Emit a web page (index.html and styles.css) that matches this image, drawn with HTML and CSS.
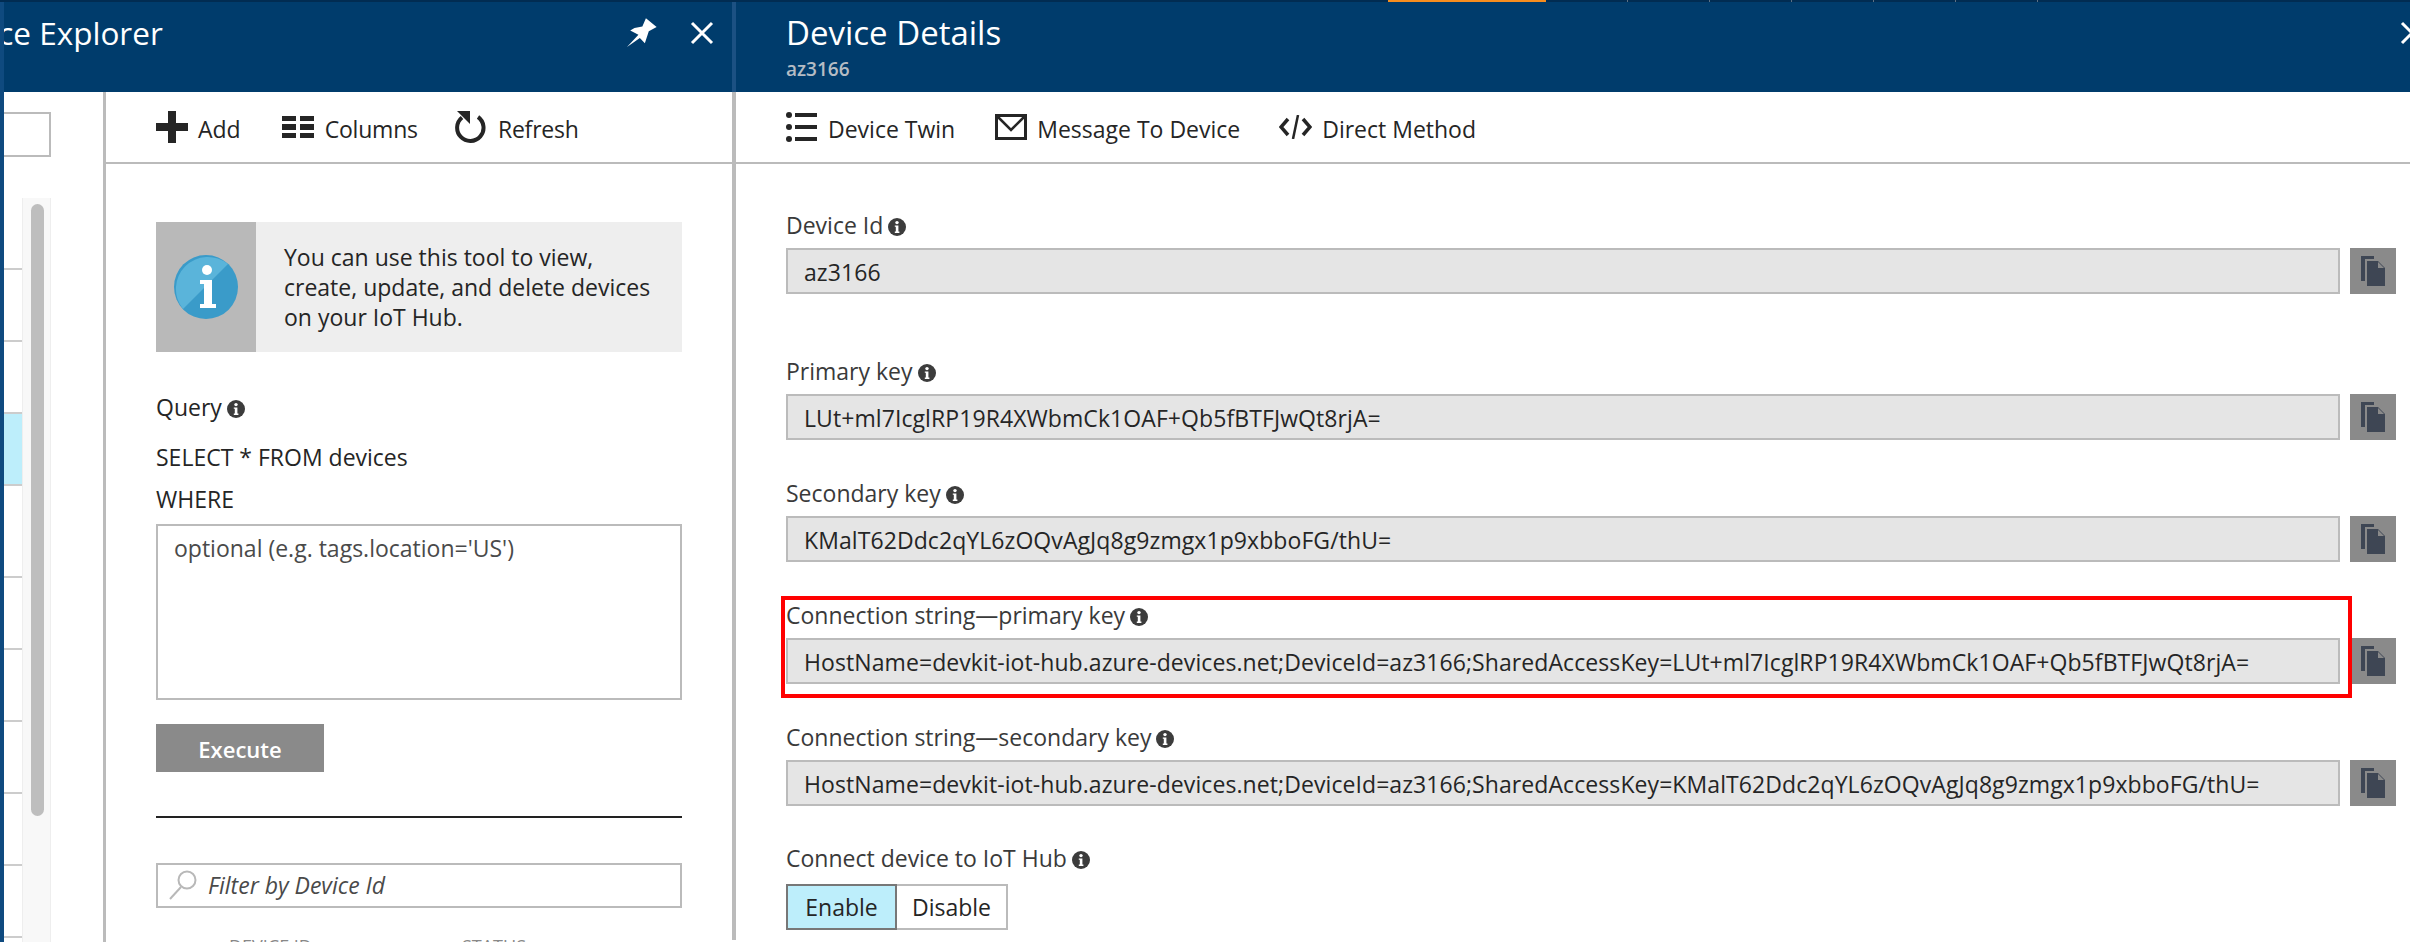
FILE: index.html
```html
<!DOCTYPE html>
<html lang="en">
<head>
  <meta charset="UTF-8">
  <title>Device Details</title>
  <link rel="stylesheet" href="styles.css">
</head>
<body>

  <svg class="defs" width="0" height="0">
    <symbol id="info" viewBox="0 0 18 18">
      <circle cx="9" cy="9" r="9" fill="#3c3c3c"/>
      <circle cx="9" cy="4.6" r="1.7" fill="#fff"/>
      <path d="M6.8 7.4h3.6v6.2h1v1.4H6.8v-1.4h1V8.8h-1z" fill="#fff"/>
    </symbol>
    <symbol id="copy" viewBox="0 0 24 30">
      <path d="M0 25V0h13v3H4v22z" fill="#3e4654"/>
      <path d="M6 5h11l7 7v18H6z" fill="#3e4654"/>
      <path d="M17 6l6 6h-6z" fill="#8a8a8a"/>
    </symbol>
  </svg>

  <div class="top-bar">
    <span class="top-gap"></span>
    <span class="top-active"></span>
    <span class="top-tab"></span>
    <span class="top-tab"></span>
    <span class="top-tab"></span>
    <span class="top-tab"></span>
    <span class="top-tab"></span>
    <span class="top-tab"></span>
  </div>

  <div class="blades">
    <div class="left-strip"></div>

    <!-- first blade -->
    <div class="blade explorer">
      <div class="blade-head">
        <div class="blade-title explorer-title">Device Explorer</div>
        <svg class="pin" width="30" height="30" viewBox="25 55 84 82">
          <path d="M25 135L57 101 34 89 46 82 68 78 78 55 108 79 86 91 75 125 61 110z" fill="#fff"/>
        </svg>
        <svg class="close" width="24" height="24" viewBox="0 0 24 24">
          <path d="M2 2L22 22M22 2L2 22" stroke="#fff" stroke-width="3"/>
        </svg>
      </div>

      <div class="explorer-body">
        <div class="list-pane">
          <div class="list-search"></div>
          <div class="list-body">
            <div class="rows">
              <div class="row"></div>
              <div class="row"></div>
              <div class="row"></div>
              <div class="row selected"></div>
              <div class="row tall"></div>
              <div class="row"></div>
              <div class="row"></div>
              <div class="row"></div>
              <div class="row"></div>
              <div class="row"></div>
            </div>
            <div class="scroll-track"><div class="scroll-thumb"></div></div>
          </div>
        </div>

        <div class="query-pane">
          <div class="toolbar">
            <div class="tool tool-add">
              <svg width="32" height="32" viewBox="0 0 32 32"><path d="M12 0h8v12h12v8H20v12h-8V20H0v-8h12z" fill="#252525"/></svg>
              <span>Add</span>
            </div>
            <div class="tool tool-columns">
              <svg width="32" height="22" viewBox="0 0 32 22">
                <path d="M0 0h14v5H0zM18 0h14v5H18zM0 8h14v6H0zM18 8h14v6H18zM0 17h14v5H0zM18 17h14v5H18z" fill="#252525"/>
              </svg>
              <span>Columns</span>
            </div>
            <div class="tool tool-refresh">
              <svg width="32" height="32" viewBox="0 0 32 32">
                <path d="M7 6.5A13.2 13.2 0 1 0 23 6" fill="none" stroke="#252525" stroke-width="4"/>
                <path d="M2 0h13v13z" fill="#252525"/>
              </svg>
              <span>Refresh</span>
            </div>
          </div>

          <div class="query-content">
            <div class="info-card">
              <div class="info-side">
                <svg width="64" height="64" viewBox="0 0 64 64">
                  <circle cx="32" cy="32" r="32" fill="#3a9bc9"/>
                  <path d="M54 9A32 32 0 0 0 9 54z" fill="#5ab4da"/>
                  <circle cx="33" cy="15" r="5" fill="#fff"/>
                  <path d="M26 25h12v24h4v4H26v-4h4V29h-4z" fill="#fff"/>
                </svg>
              </div>
              <div class="info-text">You can use this tool to view, create, update, and delete devices on your IoT Hub.</div>
            </div>

            <div class="query-label">Query <svg class="info-icon"><use href="#info"/></svg></div>
            <div class="select-line">SELECT * FROM devices</div>
            <div class="where-line">WHERE</div>
            <div class="where-box">optional (e.g. tags.location='US')</div>
            <div class="execute">Execute</div>
            <div class="query-rule"></div>
            <div class="filter-box">
              <svg width="30" height="30" viewBox="0 0 30 30">
                <circle cx="19" cy="10" r="8.5" fill="none" stroke="#b8b8b8" stroke-width="2"/>
                <path d="M13 17L2 29" stroke="#b8b8b8" stroke-width="2"/>
              </svg>
              <span>Filter by Device Id</span>
            </div>
            <div class="table-head">
              <span class="col-id">DEVICE ID</span>
              <span>STATUS</span>
            </div>
          </div>
        </div>
      </div>
    </div>

    <!-- second blade -->
    <div class="blade details">
      <div class="blade-head details-head">
        <div>
          <div class="blade-title">Device Details</div>
          <div class="blade-sub">az3166</div>
        </div>
        <svg class="close close-cut" width="24" height="24" viewBox="0 0 24 24">
          <path d="M2 2L22 22M22 2L2 22" stroke="#fff" stroke-width="3"/>
        </svg>
      </div>

      <div class="toolbar details-toolbar">
        <div class="tool tool-twin">
          <svg width="31" height="30" viewBox="0 0 31 30">
            <circle cx="3" cy="3" r="3" fill="#252525"/>
            <circle cx="3" cy="15" r="3" fill="#252525"/>
            <circle cx="3" cy="27" r="3" fill="#252525"/>
            <path d="M9 1h22v4H9zM9 13h22v4H9zM9 25h22v4H9z" fill="#252525"/>
          </svg>
          <span>Device Twin</span>
        </div>
        <div class="tool tool-message">
          <svg width="32" height="26" viewBox="0 0 32 26">
            <path d="M1.500 1.500h29v23h-29z" fill="none" stroke="#252525" stroke-width="3"/>
            <path d="M3 3l13 13L29 3" fill="none" stroke="#252525" stroke-width="2.500"/>
          </svg>
          <span>Message To Device</span>
        </div>
        <div class="tool tool-method">
          <svg width="33" height="24" viewBox="0 0 33 24">
            <path d="M9 4l-7 8 7 8M24 4l7 8-7 8" fill="none" stroke="#252525" stroke-width="3.500"/>
            <path d="M19 0l-5 24" stroke="#252525" stroke-width="2.500"/>
          </svg>
          <span>Direct Method</span>
        </div>
      </div>

      <div class="fields">
        <div class="field first">
          <div class="field-label">Device Id <svg class="info-icon"><use href="#info"/></svg></div>
          <div class="field-row">
            <div class="field-value">az3166</div>
            <div class="copy-btn"><svg width="24" height="30"><use href="#copy"/></svg></div>
          </div>
        </div>
        <div class="field second">
          <div class="field-label">Primary key <svg class="info-icon"><use href="#info"/></svg></div>
          <div class="field-row">
            <div class="field-value">LUt+ml7IcglRP19R4XWbmCk1OAF+Qb5fBTFJwQt8rjA=</div>
            <div class="copy-btn"><svg width="24" height="30"><use href="#copy"/></svg></div>
          </div>
        </div>
        <div class="field">
          <div class="field-label">Secondary key <svg class="info-icon"><use href="#info"/></svg></div>
          <div class="field-row">
            <div class="field-value">KMalT62Ddc2qYL6zOQvAgJq8g9zmgx1p9xbboFG/thU=</div>
            <div class="copy-btn"><svg width="24" height="30"><use href="#copy"/></svg></div>
          </div>
        </div>
        <div class="field">
          <div class="field-label">Connection string—primary key <svg class="info-icon"><use href="#info"/></svg></div>
          <div class="field-row">
            <div class="field-value">HostName=devkit-iot-hub.azure-devices.net;DeviceId=az3166;SharedAccessKey=LUt+ml7IcglRP19R4XWbmCk1OAF+Qb5fBTFJwQt8rjA=</div>
            <div class="copy-btn"><svg width="24" height="30"><use href="#copy"/></svg></div>
          </div>
        </div>
        <div class="field">
          <div class="field-label">Connection string—secondary key <svg class="info-icon"><use href="#info"/></svg></div>
          <div class="field-row">
            <div class="field-value">HostName=devkit-iot-hub.azure-devices.net;DeviceId=az3166;SharedAccessKey=KMalT62Ddc2qYL6zOQvAgJq8g9zmgx1p9xbboFG/thU=</div>
            <div class="copy-btn"><svg width="24" height="30"><use href="#copy"/></svg></div>
          </div>
        </div>
        <div class="field connect">
          <div class="field-label">Connect device to IoT Hub <svg class="info-icon"><use href="#info"/></svg></div>
          <div class="toggle">
            <div class="toggle-on">Enable</div>
            <div class="toggle-off">Disable</div>
          </div>
        </div>
      </div>

      <div class="red-box"></div>
    </div>
  </div>

</body>
</html>
```

FILE: styles.css
```css
* {
  box-sizing: border-box;
}

html, body {
  margin: 0;
  height: 942px;
  overflow: hidden;
}

body {
  font-family: "Open Sans", "Noto Sans", sans-serif;
  font-size: 23px;
  line-height: 30px;
  color: #252525;
  background-color: #fff;
}

.defs {
  position: absolute;
}

/* top strip */
.top-bar {
  display: flex;
  height: 2px;
  background-color: #012c52;
}

.top-gap {
  width: 1388px;
}

.top-active {
  width: 158px;
  background-color: #f78d1e;
}

.top-tab {
  width: 82px;
  border-right: 1px solid #5d7184;
}

.blades {
  display: flex;
  height: 940px;
}

.left-strip {
  width: 4px;
  flex: none;
  background-color: #0f4a7f;
}

.blade {
  display: flex;
  flex-direction: column;
  min-width: 0;
}

.explorer {
  width: 728px;
  flex: none;
}

.details {
  flex: 1;
  position: relative;
  overflow: hidden;
}

.blade-head {
  display: flex;
  height: 90px;
  flex: none;
  background-color: #003c6c;
  color: #fff;
  overflow: hidden;
}

.blade-title {
  font-size: 33px;
  line-height: 40px;
  margin-top: 11px;
  white-space: nowrap;
}

.explorer-title {
  font-size: 31.500px;
  margin-left: -70px;
}

.pin {
  margin: 16px 0 0 auto;
}

.close {
  margin: 19px 18px 0 33px;
}

.details-head {
  padding-left: 50px;
  border-left: 4px solid #1c5183;
}

.blade-sub {
  font-size: 19px;
  font-weight: 600;
  line-height: 24px;
  margin-top: 4px;
  color: #b5bcc4;
}

.close-cut {
  margin: 19px -14px 0 auto;
}

.explorer-body {
  display: flex;
  flex: 1;
  min-height: 0;
}

/* device list */
.list-pane {
  width: 102px;
  flex: none;
  padding-top: 20px;
  border-right: 3px solid #bbb;
  overflow: hidden;
}

.list-search {
  width: 57px;
  height: 45px;
  margin-left: -10px;
  border: 2px solid #bbb;
}

.list-body {
  display: flex;
  margin-top: 41px;
}

.rows {
  width: 18px;
  flex: none;
}

.row {
  height: 72px;
  border-bottom: 2px solid #ccc;
}

.row.selected {
  background-color: #bdeefb;
}

.row.tall {
  height: 92px;
}

.scroll-track {
  width: 29px;
  height: 760px;
  padding: 6px 6px 0 8px;
  background-color: #f8f8f8;
  border-left: 1px solid #eee;
  border-right: 1px solid #eee;
}

.scroll-thumb {
  height: 612px;
  border-radius: 8px;
  background-color: #bebebe;
}

/* toolbars */
.toolbar {
  display: flex;
  align-items: center;
  height: 72px;
  flex: none;
  padding-left: 50px;
  border-bottom: 2px solid #bbb;
}

.tool {
  display: flex;
  align-items: center;
  white-space: nowrap;
}

.tool span {
  margin-top: 3px;
}

.tool-add span {
  margin-left: 10px;
}

.tool-columns {
  margin-left: 41px;
}

.tool-columns span {
  margin-left: 11px;
  letter-spacing: -0.200px;
}

.tool-refresh {
  margin-left: 37px;
}

.tool-refresh span {
  margin-left: 11px;
  letter-spacing: -0.200px;
}

.tool-twin span {
  margin-left: 11px;
}

.tool-message {
  margin-left: 40px;
}

.tool-message span {
  margin-left: 10px;
}

.tool-method {
  margin-left: 39px;
}

.tool-method span {
  margin-left: 10px;
}

/* query pane */
.query-pane {
  flex: 1;
  min-width: 0;
}

.query-content {
  padding: 58px 50px 0;
}

.info-card {
  display: flex;
  height: 130px;
  background-color: #eee;
}

.info-side {
  display: flex;
  width: 100px;
  flex: none;
  padding-left: 18px;
  align-items: center;
  background-color: #b9b9b9;
}

.info-text {
  padding: 20px 20px 0 28px;
}

.info-icon {
  width: 18px;
  height: 18px;
  margin-left: -1px;
  vertical-align: -2px;
}

.query-label {
  margin-top: 41px;
  line-height: 28px;
}

.select-line {
  margin-top: 22px;
  line-height: 28px;
}

.where-line {
  margin-top: 14px;
  line-height: 28px;
}

.where-box {
  height: 176px;
  margin-top: 11px;
  padding: 7px 16px;
  border: 2px solid #bbb;
  color: #4a4a4a;
}

.execute {
  width: 168px;
  height: 48px;
  margin-top: 24px;
  background-color: #8a8a8a;
  color: #fff;
  font-size: 22px;
  font-weight: 600;
  line-height: 50px;
  text-align: center;
}

.query-rule {
  height: 2px;
  margin-top: 44px;
  background-color: #222;
}

.filter-box {
  display: flex;
  align-items: center;
  height: 45px;
  margin-top: 45px;
  padding: 0 0 2px 10px;
  border: 2px solid #bbb;
  color: #4a4a4a;
  font-style: italic;
}

.filter-box span {
  margin-left: 10px;
}

.table-head {
  display: flex;
  margin-top: 28px;
  font-size: 18px;
  line-height: 20px;
  color: #888;
}

.col-id {
  margin-left: 73px;
  margin-right: 150px;
}

/* detail fields */
.details-toolbar,
.fields {
  border-left: 4px solid #bbb;
}

.fields {
  height: 776px;
  padding: 0 14px 0 50px;
}

.field {
  margin-top: 39px;
}

.field.first {
  margin-top: 47px;
}

.field.second {
  margin-top: 63px;
}

.field.connect {
  margin-top: 38px;
}

.field-label {
  margin-bottom: 9px;
  line-height: 28px;
  color: #3a3a3a;
}

.connect .field-label {
  margin-bottom: 12px;
}

.field-row {
  display: flex;
  gap: 10px;
}

.field-value {
  flex: 1;
  height: 46px;
  padding-left: 16px;
  line-height: 44px;
  letter-spacing: 0.080px;
  background-color: #e5e5e5;
  border: 2px solid #bbb;
  white-space: nowrap;
  overflow: hidden;
}

.copy-btn {
  display: flex;
  align-items: center;
  justify-content: center;
  width: 46px;
  height: 46px;
  flex: none;
  background-color: #8a8a8a;
}

.toggle {
  display: flex;
  width: 222px;
  height: 46px;
  text-align: center;
  line-height: 42px;
}

.toggle-on {
  width: 111px;
  background-color: #bdeefb;
  border: 2px solid #777;
}

.toggle-off {
  flex: 1;
  border: 2px solid #bbb;
  border-left: 0;
}

/* annotation drawn on the screenshot */
.red-box {
  position: absolute;
  left: 49px;
  top: 594px;
  width: 1571px;
  height: 102px;
  border: 4px solid #f00;
}
```
